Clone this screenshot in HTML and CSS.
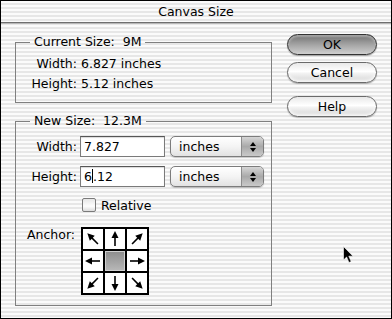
FILE: index.html
```html
<!DOCTYPE html>
<html lang="en">
<head>
  <meta charset="UTF-8" />
  <title>Canvas Size</title>
  <link rel="stylesheet" href="styles.css">
</head>
<body>
  <div class="dialog">
    <div class="titlebar">Canvas Size</div>

    <div class="content">
      <div class="groups">
        <fieldset class="group current">
          <legend>Current Size:&nbsp; 9M</legend>
          <div class="field-row"><span class="label">Width:</span><span class="value">6.827 inches</span></div>
          <div class="field-row"><span class="label">Height:</span><span class="value">5.12 inches</span></div>
        </fieldset>

        <fieldset class="group new-size">
          <legend>New Size:&nbsp; 12.3M</legend>
          <div class="input-row">
            <span class="label">Width:</span>
            <div class="text-box">7.827</div>
            <div class="popup">
              <span class="popup-text">inches</span>
              <span class="popup-arrows">
                <svg width="8" height="12" viewBox="0 0 8 12"><path d="M4 1 L7 5 L1 5 Z M1 7 L7 7 L4 11 Z" fill="#000"/></svg>
              </span>
            </div>
          </div>
          <div class="input-row">
            <span class="label">Height:</span>
            <div class="text-box">6<span class="caret"></span>.12</div>
            <div class="popup">
              <span class="popup-text">inches</span>
              <span class="popup-arrows">
                <svg width="8" height="12" viewBox="0 0 8 12"><path d="M4 1 L7 5 L1 5 Z M1 7 L7 7 L4 11 Z" fill="#000"/></svg>
              </span>
            </div>
          </div>
          <div class="check-row">
            <span class="checkbox"></span>
            <span>Relative</span>
          </div>
          <div class="anchor-row">
            <span class="anchor-label">Anchor:</span>
            <div class="anchor-grid">
              <div class="cell"><svg viewBox="0 0 20 20"><g transform="rotate(-45 10 10)"><path d="M10 17 L10 7" stroke="#000" stroke-width="1.6"/><path d="M10 2 L13.5 9 L6.5 9 Z" fill="#000"/></g></svg></div>
              <div class="cell"><svg viewBox="0 0 20 20"><g><path d="M10 17 L10 7" stroke="#000" stroke-width="1.6"/><path d="M10 2 L13.5 9 L6.5 9 Z" fill="#000"/></g></svg></div>
              <div class="cell"><svg viewBox="0 0 20 20"><g transform="rotate(45 10 10)"><path d="M10 17 L10 7" stroke="#000" stroke-width="1.6"/><path d="M10 2 L13.5 9 L6.5 9 Z" fill="#000"/></g></svg></div>
              <div class="cell"><svg viewBox="0 0 20 20"><g transform="rotate(-90 10 10)"><path d="M10 17 L10 7" stroke="#000" stroke-width="1.6"/><path d="M10 2 L13.5 9 L6.5 9 Z" fill="#000"/></g></svg></div>
              <div class="cell center"></div>
              <div class="cell"><svg viewBox="0 0 20 20"><g transform="rotate(90 10 10)"><path d="M10 17 L10 7" stroke="#000" stroke-width="1.6"/><path d="M10 2 L13.5 9 L6.5 9 Z" fill="#000"/></g></svg></div>
              <div class="cell"><svg viewBox="0 0 20 20"><g transform="rotate(-135 10 10)"><path d="M10 17 L10 7" stroke="#000" stroke-width="1.6"/><path d="M10 2 L13.5 9 L6.5 9 Z" fill="#000"/></g></svg></div>
              <div class="cell"><svg viewBox="0 0 20 20"><g transform="rotate(180 10 10)"><path d="M10 17 L10 7" stroke="#000" stroke-width="1.6"/><path d="M10 2 L13.5 9 L6.5 9 Z" fill="#000"/></g></svg></div>
              <div class="cell"><svg viewBox="0 0 20 20"><g transform="rotate(135 10 10)"><path d="M10 17 L10 7" stroke="#000" stroke-width="1.6"/><path d="M10 2 L13.5 9 L6.5 9 Z" fill="#000"/></g></svg></div>
            </div>
          </div>
        </fieldset>
      </div>

      <div class="buttons">
        <button class="btn btn-default">OK</button>
        <button class="btn btn-cancel">Cancel</button>
        <button class="btn btn-help">Help</button>
      </div>
    </div>

    <!-- mouse pointer -->
    <svg class="pointer" width="12" height="18" viewBox="0 0 12 18">
      <path d="M0.5 0.5 L0.5 14 L3.6 11 L6 16.5 L8.2 15.5 L5.8 10.2 L10 10.2 Z" fill="#000" stroke="#fff" stroke-width="0.6"/>
    </svg>
  </div>
</body>
</html>
```

FILE: styles.css
```css
body {
  margin: 0;
  font-family: 'DejaVu Sans', Verdana, sans-serif;
  font-size: 12.5px;
  color: #000;
  background: #fff;
}
.dialog {
  position: relative;
  width: 392px;
  height: 319px;
  box-sizing: border-box;
  border: 1px solid #000;
  background: repeating-linear-gradient(to bottom, #fbfbfb 0, #fbfbfb 2px, #e7e7e7 2px, #e7e7e7 4px);
}
.titlebar {
  height: 21px;
  line-height: 21px;
  text-align: center;
  border-bottom: 1px solid #6f6f6f;
  box-shadow: 0 1px 0 #b8b8b8;
}
.content {
  display: flex;
  padding: 11px 0 0 14px;
}
.groups {
  width: 257px;
}
.group {
  margin: 0;
  padding: 0;
  min-width: 0;
  box-sizing: border-box;
  width: 257px;
  border: 1px solid #808080;
}
.group legend {
  margin-left: 14px;
  padding: 0 4px;
  line-height: 16px;
}
.current {
  padding: 4px 0 8px;
}
.field-row {
  display: flex;
  height: 20px;
  line-height: 20px;
}
.label {
  width: 61px;
  text-align: right;
  flex-shrink: 0;
}
.field-row .value {
  margin-left: 4px;
}
.new-size {
  margin-top: 10px;
  padding: 7px 0 10px;
}
.input-row {
  display: flex;
  align-items: center;
  height: 21px;
  margin-bottom: 9px;
}
.text-box {
  margin-left: 3px;
  width: 85px;
  height: 21px;
  box-sizing: border-box;
  border: 1px solid #7a7a7a;
  border-top-color: #555;
  background: #fff;
  box-shadow: inset 0 1px 1px rgba(0, 0, 0, 0.15);
  padding-left: 3px;
  line-height: 19px;
}
.caret {
  display: inline-block;
  width: 1px;
  height: 14px;
  background: #000;
  vertical-align: -2px;
}
.popup {
  margin-left: 5px;
  width: 94px;
  height: 21px;
  box-sizing: border-box;
  display: flex;
  border: 1px solid #7c7c7c;
  border-radius: 5px;
  background: linear-gradient(#ffffff, #f4f4f4 50%, #e2e2e2);
  box-shadow: 0 1px 1px rgba(0, 0, 0, 0.2);
  overflow: hidden;
}
.popup-text {
  flex: 1;
  padding-left: 8px;
  line-height: 19px;
}
.popup-arrows {
  width: 21px;
  display: flex;
  align-items: center;
  justify-content: center;
  border-left: 1px solid #8c8c8c;
  background: linear-gradient(#d6d6d6, #a9a9a9 50%, #c9c9c9);
}
.check-row {
  display: flex;
  align-items: center;
  height: 16px;
  margin-top: 10px;
  padding-left: 66px;
}
.checkbox {
  width: 12px;
  height: 12px;
  margin-right: 5px;
  border: 1px solid #7a7a7a;
  border-radius: 2px;
  background: linear-gradient(#e6e6e6, #fdfdfd 60%, #dcdcdc);
}
.anchor-row {
  display: flex;
  align-items: flex-start;
  margin-top: 14px;
  padding-left: 11px;
}
.anchor-label {
  width: 54px;
  line-height: 16px;
}
.anchor-grid {
  display: grid;
  grid-template-columns: repeat(3, 20px);
  grid-template-rows: repeat(3, 20px);
  gap: 2px;
  padding: 2px;
  background: #000;
}
.cell {
  background: #fff;
}
.cell svg {
  display: block;
  width: 20px;
  height: 20px;
}
.cell.center {
  background: linear-gradient(#8c8c8c, #b9b9b9);
  box-shadow: inset 0 0 0 1px #d0d0d0;
}
.buttons {
  display: flex;
  flex-direction: column;
  margin-left: 15px;
  width: 90px;
}
.btn {
  height: 21px;
  padding: 0;
  font-family: inherit;
  font-size: 12.5px;
  color: #000;
  border-radius: 11px;
  border: 1px solid #6a6a6a;
  background: linear-gradient(#e9e9e9, #ffffff 45%, #f2f2f2 55%, #d4d4d4);
  box-shadow: inset 0 -2px 3px rgba(255, 255, 255, 0.8), 0 1px 1px rgba(0, 0, 0, 0.25);
}
.btn-default {
  border-color: #333;
  background: linear-gradient(#6f6f6f, #9a9a9a 40%, #acacac 60%, #cfcfcf);
  box-shadow: inset 0 2px 2px rgba(255, 255, 255, 0.35), 0 1px 1px rgba(0, 0, 0, 0.3);
}
.btn-cancel {
  margin-top: 7px;
}
.btn-help {
  margin-top: 13px;
}
.pointer {
  position: absolute;
  left: 342px;
  top: 245px;
}
```
